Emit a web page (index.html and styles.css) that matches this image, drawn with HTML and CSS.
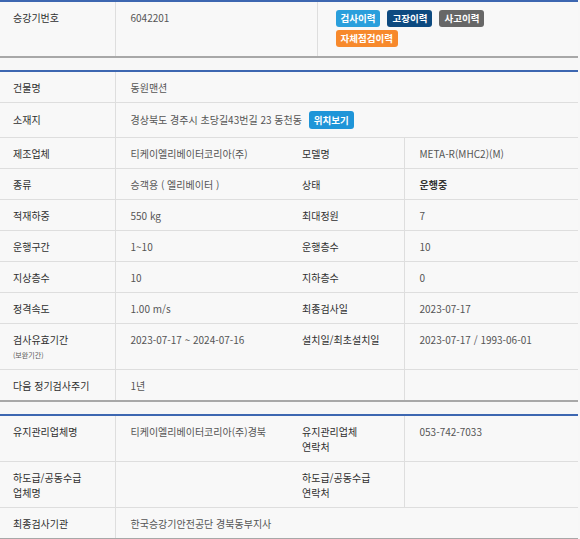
FILE: index.html
```html
<!DOCTYPE html>
<html lang="ko">
<head>
<meta charset="utf-8">
<link rel="stylesheet" href="styles.css">
</head>
<body>
<table class="tbl top">
  <colgroup><col class="c-l"><col class="c-v1"><col></colgroup>
  <tr>
    <th>승강기번호</th>
    <td>6042201</td>
    <td class="btn-cell">
      <span class="btn b-blue">검사이력</span><span class="btn b-navy">고장이력</span><span class="btn b-gray">사고이력</span><br><span class="btn b-orange">자체점검이력</span>
    </td>
  </tr>
</table>

<table class="tbl">
  <colgroup><col class="c-l"><col class="c-v"><col class="c-l"><col class="c-v"></colgroup>
  <tr><th>건물명</th><td colspan="3">동원맨션</td></tr>
  <tr class="addr"><th>소재지</th><td colspan="3">경상북도 경주시 초당길43번길 23 동천동 <span class="btn b-loc">위치보기</span></td></tr>
  <tr><th>제조업체</th><td>티케이엘리베이터코리아(주)</td><th>모델명</th><td>META-R(MHC2)(M)</td></tr>
  <tr><th>종류</th><td>승객용 ( 엘리베이터 )</td><th>상태</th><td class="strong">운행중</td></tr>
  <tr><th>적재하중</th><td>550 kg</td><th>최대정원</th><td>7</td></tr>
  <tr><th>운행구간</th><td>1~10</td><th>운행층수</th><td>10</td></tr>
  <tr><th>지상층수</th><td>10</td><th>지하층수</th><td>0</td></tr>
  <tr><th>정격속도</th><td>1.00 m/s</td><th>최종검사일</th><td>2023-07-17</td></tr>
  <tr><th>검사유효기간<span class="sub">(보완기간)</span></th><td>2023-07-17 ~ 2024-07-16</td><th>설치일/최초설치일</th><td>2023-07-17 / 1993-06-01</td></tr>
  <tr><th>다음 정기검사주기</th><td>1년</td><th></th><td></td></tr>
</table>

<table class="tbl">
  <colgroup><col class="c-l"><col class="c-v"><col class="c-l"><col class="c-v"></colgroup>
  <tr><th>유지관리업체명</th><td>티케이엘리베이터코리아(주)경북</td><th>유지관리업체<br>연락처</th><td>053-742-7033</td></tr>
  <tr><th>하도급/공동수급<br>업체명</th><td></td><th>하도급/공동수급<br>연락처</th><td></td></tr>
  <tr><th>최종검사기관</th><td colspan="3">한국승강기안전공단 경북동부지사</td></tr>
</table>
</body>
</html>
```

FILE: styles.css
```css
html, body {
  margin: 0;
  padding: 0;
  background: #f7f7f7;
}
body {
  font-family: "Noto Sans CJK KR", "Noto Sans", sans-serif;
  font-size: 10px;
  color: #555;
}
.tbl {
  width: 578px;
  border-collapse: collapse;
  table-layout: fixed;
  border-top: 2px solid #3d67b1;
  border-bottom: 2px solid #a8a8a8;
  margin-bottom: 12px;
  background: #f8f8f8;
}
.c-l { width: 115px; }
.c-v { width: 174px; }
.c-v1 { width: 202px; }
.tbl th, .tbl td {
  text-align: left;
  vertical-align: top;
  line-height: 15px;
  padding: 8px 8px 7px 14px;
  border-bottom: 1px solid #dedede;
  border-left: 1px solid #dedede;
  font-weight: normal;
}
.tbl th {
  color: #2f2f2f;
  padding-left: 13px;
  border-left: none;
}
.tbl td { color: #555; padding-left: 15px; }
.tbl tr:last-child th, .tbl tr:last-child td { border-bottom: none; }
.tbl td.strong { font-weight: bold; color: #333; }
.sub {
  display: block;
  font-size: 7px;
  line-height: 14px;
  margin-top: 1px;
  color: #555;
}
.tbl td.btn-cell {
  padding: 8px 8px 6px 18px;
  line-height: 20px;
}
.btn {
  display: inline-block;
  height: 17px;
  line-height: 17px;
  padding: 0 5px;
  margin-right: 7px;
  border-radius: 3px;
  color: #fff;
  font-weight: bold;
  font-size: 9.5px;
  vertical-align: top;
}
.b-blue { background: #2a9fdc; }
.b-navy { background: #0d4a80; }
.b-gray { background: #676767; }
.b-orange { background: #f7892c; }
.b-loc { background: #1f95d8; margin-left: 4px; height: 18px; line-height: 18px; }
.tbl .addr td { padding-top: 8px; padding-bottom: 8px; line-height: 18px; }
.tbl .addr th { padding-top: 9px; padding-bottom: 8px; }
```
